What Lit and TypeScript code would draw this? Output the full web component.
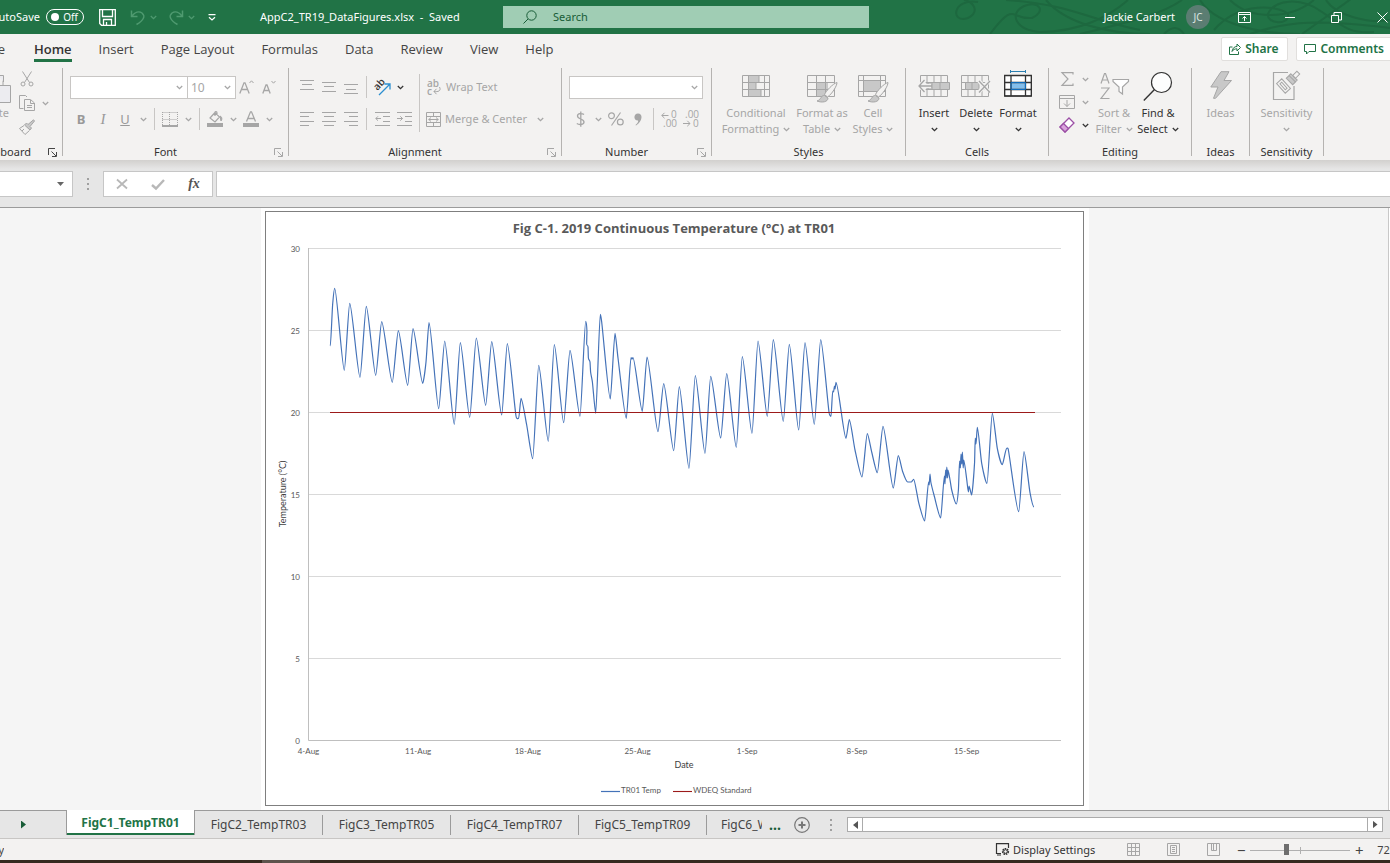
import { LitElement, html, svg, css, nothing } from "lit";
import { customElement, property } from "lit/decorators.js";

const icon = (w: number, h: number, body: unknown) => html`<svg class="ic" width=${w} height=${h} viewBox="0 0 ${w} ${h}" fill="none" stroke="currentColor" aria-hidden="true">${body}</svg>`;

/* Large ribbon pictures share one height; `top` is the space above the drawing. */
const picture = (w: number, top: number, body: unknown) => icon(w, 34, svg`<g transform="translate(0 ${top})">${body}</g>`);

const chevron = () => icon(7, 5, svg`<path d="M.8 1 3.5 3.6 6.2 1" stroke-width="1.3"/>`);
const lines = (rows: number[][]) => svg`${rows.map(([x1, x2, y]) => svg`<path d="M${x1} ${y}.5H${x2}"/>`)}`;

const tableGrid = svg`<path d="M.5 .5H27.5V21.5H.5ZM7 1V21M14 1V21M21 1V21M1 7.5H27M1 14.5H27"/>`;
const brush = svg`<path d="M30 7.500C26 8.500 19 16 17.500 19.500L20.500 22C25 19 30 11 30 7.500Z" fill="#f3f2f1"/><path d="M17.500 20.500C14 20 14 25 10 26C15 28 21 27 21 23Z" fill="#c8c8c8"/>`;

const ICONS: Record<string, unknown> = {
  save: icon(17, 17, svg`<path d="M.7 .7H16.300V16.300H2.500L.7 14.500ZM3.500 1V7.500H13.500V1M4.500 16V10.500H12.500V16M7.500 16V13" stroke-width="1.300"/>`),
  undo: icon(16, 16, svg`<path d="M1.500 1.500V7.500H7.500M2 7C5 3 9 2 12 4C15.500 7 14 11 6.500 15.500" stroke-width="1.500"/>`),
  redo: icon(16, 16, svg`<path d="M14.500 1.500V7.500H8.500M14 7C11 3 7 2 4 4C.5 7 2 11 9.500 15.500" stroke-width="1.500"/>`),
  customize: icon(8, 7, svg`<path d="M.5 .7H7.500M1 3.200 4 6 7 3.200" stroke-width="1.200"/>`),
  search: icon(14, 14, svg`<circle cx="8.500" cy="5.500" r="4.700"/><path d="M5 9 .5 13.500"/>`),
  ribbonMode: icon(13, 11, svg`<path d="M.5 .5H12.500V10.500H.5ZM.5 2.500H12.500M6.500 9V4.500M4.500 6.500 6.500 4.500 8.500 6.500"/>`),
  minimize: icon(10, 10, svg`<path d="M0 5.500H10"/>`),
  restore: icon(11, 11, svg`<path d="M.5 3.500H7.500V10.500H.5ZM3 3V.5H10.500V8H8"/>`),
  close: icon(11, 11, svg`<path d="M.5 .5 10.500 10.500M10.500 .5 .5 10.500"/>`),
  share: icon(12, 12, svg`<path d="M3.500 4H.5V11.500H9.500V8.500M3 8.500C3.500 5 5.500 3.500 8 3.500V1L11.500 4.500 8 8V5.800C6 5.800 4 6.500 3 8.500Z"/>`),
  comment: icon(12, 11, svg`<path d="M.5 .5H11.500V7.500H5L2.500 10V7.500H.5Z"/>`),
  paste: icon(30, 34, svg`<path d="M2 6.500H22V28.500H2Z" /><path d="M17 4.500H22.500V11M10 14.500H29.500V31.500H10Z" fill="#ececf0"/>`),
  cut: icon(14, 16, svg`<path d="M2.500 .5 9.500 11.500M11.500 .5 4.500 11.500"/><circle cx="3" cy="13" r="2"/><circle cx="11" cy="13" r="2"/>`),
  copy: icon(16, 16, svg`<path d="M4.500 13.500H.5V.5H6.500L8 2"/><path d="M5.500 4.500H11.500L15.500 8V15.500H5.500ZM11.500 5V8.500H15M8 10.500H13M8 12.500H13"/>`),
  painter: icon(16, 16, svg`<path d="M14.500 .8 9 5.500 7.500 4 5.500 6 11 11 12.500 9 11 7.500 15.500 2Z" fill="#c8c8c8"/><path d="M5 6.500 .5 9.500 6 15.500 10.500 11.500M3 12 5 10"/>`),
  launcher: icon(9, 9, svg`<path d="M.5 7V.5H7M3.500 3.500 8 8M8.500 4V8.500H4"/>`),
  borders: icon(16, 15, svg`<path d="M.5 .5H15M.5 0V14M15.500 0V14M.5 7.500H15M7.500 0V14" stroke-dasharray="1 1"/><path d="M0 14H16" stroke-width="2"/>`),
  fill: icon(17, 16, svg`<path d="M8 1.500 3 7 8 11 12.500 6ZM8 5V1.500C8 .3 10 .3 10 2V4" stroke-width="1.200"/><path d="M13 5C15.500 6 15 9 14 10Z" fill="currentColor"/><path d="M0 14H16" stroke-width="4"/>`),
  fontColor: icon(16, 16, svg`<path d="M3.500 10.500 7.500 .8H8.500L12.500 10.500M5 7.500H11" stroke-width="1.300"/><path d="M0 14H16" stroke-width="4"/>`),
  growFont: icon(16, 16, svg`<path d="M.8 14.500 5 3.800H6L10.200 14.500M2.500 10.500H8.500" stroke-width="1.300"/><path d="M10.500 4 12.500 1.800 14.500 4"/>`),
  shrinkFont: icon(14, 16, svg`<path d="M.8 14.500 4 6H5L8.200 14.500M2.200 11.500H6.800" stroke-width="1.300"/><path d="M9.500 2 11.500 4.200 13.500 2"/>`),
  top: icon(14, 14, lines([[0, 14, 0], [2, 12, 4], [0, 14, 9]])),
  middle: icon(14, 14, lines([[0, 14, 2], [2, 12, 6], [0, 14, 11]])),
  bottom: icon(14, 14, lines([[0, 14, 4], [2, 12, 9], [0, 14, 13]])),
  left: icon(14, 14, lines([[0, 14, 0], [0, 9, 4], [0, 14, 9], [0, 9, 13]])),
  center: icon(14, 14, lines([[0, 14, 0], [2, 12, 4], [0, 14, 9], [2, 12, 13]])),
  right: icon(14, 14, lines([[0, 14, 0], [5, 14, 4], [0, 14, 9], [5, 14, 13]])),
  outdent: icon(15, 14, svg`${lines([[0, 15, 0], [8, 15, 4], [8, 15, 9], [0, 15, 13]])}<path d="M6 6.500H.8M3 4.300 .8 6.500 3 8.700"/>`),
  indent: icon(15, 14, svg`${lines([[0, 15, 0], [8, 15, 4], [8, 15, 9], [0, 15, 13]])}<path d="M0 6.500H5.500M3.300 4.300 5.500 6.500 3.300 8.700"/>`),
  orient: icon(18, 18, svg`<text class="glyph" transform="translate(4.500 13) rotate(-48)">ab</text><path d="M6 17 16.500 6.500M11.500 6H17V11.500" stroke="#2b8fd0" stroke-width="1.300"/>`),
  wrap: icon(16, 16, svg`<text class="glyph" x="1" y="8">ab</text><text class="glyph" x="1" y="16">c</text><path d="M13.500 8C15.500 12 12 13 8 12.500M10.500 9.800 8 12.500 10.500 15.200"/>`),
  merge: icon(15, 15, svg`<path d="M.5 .5H14.500V14.500H.5ZM.5 4.500H14.500M.5 10.500H14.500M7.500 .5V4M7.500 11V14M2.500 7.500H12.500M5 5.500 2.800 7.500 5 9.500M10 5.500 12.200 7.500 10 9.500"/>`),
  dollar: icon(9, 16, svg`<path d="M8 3.500C6 2 1.500 2.200 1.500 5C1.500 8.500 8 7.500 8 11C8 14 3 14 .8 12.500M4.800 .5V15.800" stroke-width="1.300"/>`),
  percent: icon(16, 14, svg`<circle cx="3.500" cy="3.800" r="2.900" stroke-width="1.200"/><circle cx="12.300" cy="10" r="2.900" stroke-width="1.200"/><path d="M12.500 .5 3.500 13.500" stroke-width="1.200"/>`),
  comma: icon(8, 13, svg`<path d="M4 .5C9 .5 9 8 2 12.500L1.500 12C4 10 4.500 8 4 7.500C-1 7.500-.5 .5 4 .5Z" fill="currentColor" stroke="none"/>`),
  incDec: icon(17, 16, svg`<path d="M7.500 4.500H.8M3.500 1.800 .8 4.500 3.500 7.200"/><text class="digit" x="10" y="7">0</text><text class="digit" x="2" y="16">.00</text>`),
  decDec: icon(17, 16, svg`<text class="digit" x="2" y="7">.00</text><path d="M0 12.500H7M4.300 9.800 7 12.500 4.300 15.200"/><text class="digit" x="10" y="16">0</text>`),
  condFormat: picture(28, 5, svg`<path d="M6.500 1H17V7H6.500ZM6.500 8H14V14H6.500ZM6.500 15H19V21H6.500Z" fill="#c8c8c8" stroke="none"/><path d="M.5 .5H27.500V21.500H.5ZM6.500 1V21M17 1V7M14 7V14M19 14V21M22.500 1V21M1 7.500H27M1 14.500H27"/>`),
  formatTable: picture(31, 5, svg`<path d="M10 8H21V21H10Z" fill="#c8c8c8" stroke="none"/><path d="M.5 .5H27.500V21.500H.5ZM9.500 1V21M18.500 1V21M1 7.500H27M1 14.500H27"/>${brush}`),
  cellStyle: picture(31, 5, svg`<path d="M5 5H23V17H5Z" fill="#c8c8c8" stroke="none"/><path d="M.5 .5H27.500V21.500H.5ZM5.500 1V21M22.500 1V21M1 5.500H27M1 16.500H27"/>${brush}`),
  insertCell: picture(32, 5, svg`<g transform="translate(2)">${tableGrid}</g><path d="M10 7.500H31.500V14.500H10Z" fill="#c8c8c8"/><path d="M22 8V14M14 8V14"/><path d="M13 11H1.500M6.500 6 1.500 11 6.500 16" stroke="#f3f2f1" stroke-width="4"/><path d="M14 11H1M6.500 5 1 11 6.500 17" stroke-width="1.300"/>`),
  deleteCell: picture(30, 5, svg`${tableGrid}<path d="M4.500 7.500H18V14.500H4.500Z" fill="#c8c8c8"/><path d="M11 8V14"/><path d="M18 6 28 17M28 6 18 17" stroke="#f3f2f1" stroke-width="4"/><path d="M18 6 29 17.500M29 6 18 17.500" stroke-width="1.300"/>`),
  formatCell: picture(28, 0, svg`<path d="M.5 5.500H27.500V26H.5Z" fill="#fff"/><path d="M6.500 12.500H21.500V19.500H6.500Z" fill="#83beec" stroke="none"/><path d="M.7 5.500H27.300V26H.7ZM7 6V26M21.500 6V26M1 12.500H27M1 19.500H27" stroke-width="1.300"/><path d="M7 12.500H21.500V19.500H7Z" stroke="#0f6cbd"/><path d="M6.500 0V3M21.500 0V3M6.500 1.500H21.500" stroke="#2b7fb0"/>`),
  sum: icon(13, 14, svg`<path d="M12 2.500V.7H1L7 7 1 13.300H12V11.500" stroke-width="1.200"/>`),
  fillDown: icon(16, 14, svg`<path d="M.5 .5H15.500V13.500H.5ZM.5 3.500H15.500M8 5V11.500M5 8.500 8 11.500 11 8.500"/>`),
  eraser: icon(16, 16, svg`<path d="M10 1 15 6 6 15 1 10Z" fill="#fff" stroke="#9b4fa5" stroke-width="1.300"/><path d="M4.500 6.500 9.500 11.500 6 15 1 10Z" fill="#d9a3dc" stroke="#9b4fa5" stroke-width="1.300"/>`),
  sort: picture(29, 2, svg`<path d="M1 11.500 4.500 1.500H5.500L9 11.500M2.500 8H7.500M1 16H9L1 26.500H9.500" stroke-width="1.200"/><path d="M13 7.500H28.500V9.500L22.500 15V22L19 19.500V15L13 9.500Z" fill="#fff" stroke-width="1.200"/>`),
  find: picture(30, 1, svg`<circle cx="18.500" cy="11.500" r="10" fill="#fdfdfd" stroke-width="1.200"/><path d="M11.500 18.500.8 29.500" stroke-width="1.400"/>`),
  ideas: picture(22, 1, svg`<path d="M11 .7H19L14 9.500H21.500L5.500 27.300H3.500L8 16H.8Z" fill="#c8c8c8"/>`),
  sensitivity: picture(28, 0, svg`<path d="M15 2.500H.5V29.500H21V16" stroke-width="1.200"/><g transform="translate(10.500 16) rotate(-42)"><path d="M-3.500-6.500H3.500V6.500H-3.500ZM-1.200-4H1.200V4H-1.200Z"/></g><g transform="translate(20 8) rotate(45)"><path d="M-4.500 1H4.500V5H-4.500ZM-4.500-1.500H4.500V1H-4.500Z" fill="#c8c8c8"/><path d="M-2-1.500V-7.500H2V-1.500Z"/></g>`),
  cancel: icon(12, 10, svg`<path d="M1 .5 11 9.500M11 .5 1 9.500" stroke-width="1.800"/>`),
  enter: icon(14, 11, svg`<path d="M1 6 5 9.500 13 1" stroke-width="2.400"/>`),
  addSheet: icon(16, 16, svg`<circle cx="8" cy="8" r="7.300" stroke-width="1.200"/><path d="M8 4.500V11.500M4.500 8H11.500" stroke-width="2"/>`),
  display: icon(14, 13, svg`<path d="M5 10.500H.5V.7H12.500V5M1 12H5" stroke-width="1.200"/><circle cx="9.500" cy="8.500" r="2.800" stroke-width="1.600" stroke-dasharray="1.600 .8"/><circle cx="9.500" cy="8.500" r="1.800"/>`),
  viewNormal: icon(13, 13, svg`<path d="M.5 .5H12.500V12.500H.5ZM4.500 .5V12.500M8.500 .5V12.500M.5 4.500H12.500M.5 8.500H12.500"/>`),
  viewLayout: icon(13, 13, svg`<path d="M.5 .5H12.500V12.500H.5ZM3.500 2.500H9.500V10.500H3.500ZM5 4.500H8M5 6.500H8M5 8.500H8"/>`),
  viewBreak: icon(13, 13, svg`<path d="M.5 .5H12.500V12.500H.5ZM4.500 .5V7.500H9.500V.5M6.500 .5V7"/>`),
};

/* ---------- chart ---------- */

const SERIES: [number, number][] = [
  [330.3, 346], [332.6, 305], [334.7, 288.3], [344.3, 370.3], [349.7, 303.3], [360, 377.3], [366.3, 306.3],
  [375.7, 375.3], [381.7, 321.7], [392.3, 382.3], [398.3, 330.7], [407.7, 385.3], [413, 328.7], [422.7, 383.3],
  [426, 362], [429, 322.7], [438.7, 408.7], [444.7, 341], [454.3, 424.3], [460.3, 342.7], [469.7, 417.3],
  [476.3, 338], [485.7, 405.3], [491.7, 341.7], [501.7, 415], [507.3, 343.7], [516, 416], [518.7, 418.3],
  [521, 398.3], [526.7, 425], [532.7, 458.7], [538.7, 365.3], [548.3, 441.3], [554.3, 344.7], [563.7, 422.7],
  [570, 350.3], [580, 416.3], [585.7, 321.3], [587, 332], [586.6, 343], [588, 347], [588.4, 358], [590, 362],
  [590.6, 372], [592.4, 382], [595.7, 413.3], [600.3, 314.3], [601.7, 322], [610.3, 399], [615, 333.3],
  [618, 358], [626.3, 418.3], [631, 357.7], [632, 359], [633, 357.7], [642.3, 411.3], [647, 357], [658, 431.7],
  [663.7, 383.7], [673.7, 450.7], [679.3, 386.7], [689, 468.3], [695.3, 375.7], [705, 453.3], [710.7, 376.3],
  [720.7, 438], [726.7, 373.7], [736.3, 447.3], [742.3, 356.7], [752, 433.3], [758, 341], [767.3, 416.3],
  [773.3, 339.7], [783.3, 421.3], [789.3, 344.3], [798.7, 430], [805, 342.7], [814.3, 424.3], [820.7, 339.7],
  [829, 412], [831, 416.3], [832.7, 391], [833.6, 392], [834.4, 386], [835, 389], [836, 382.3], [846, 438.3],
  [849.3, 419.7], [855, 450], [862, 477], [867.3, 433.7], [871.7, 452], [877.3, 472.7], [883, 426.3],
  [893.3, 488], [898.3, 455.7], [902.7, 471.7], [907.7, 482], [911.3, 482], [913.7, 479.3], [918.7, 502.7],
  [924.7, 521], [928.6, 482], [929.2, 485], [930, 474], [930.8, 482], [934, 495], [940.7, 518], [944.4, 476],
  [945, 484], [945.6, 470], [946.2, 478], [946.8, 467], [947.6, 478], [948, 470], [951.7, 490], [956.3, 504],
  [958.4, 490], [959.6, 461], [960.4, 468], [961, 454], [961.8, 464], [962.4, 452], [963.2, 468], [963.8, 460],
  [966.7, 479.3], [968.4, 492], [969, 486], [971.7, 495], [974.6, 462], [975.2, 438], [976, 444],
  [977.3, 427.3], [981.7, 463.3], [987, 483.3], [992.3, 413.3], [997.3, 448.3], [1002.3, 464.7],
  [1006.5, 448.5], [1008.2, 449], [1018.7, 511.7], [1024, 451.7], [1030, 492.7], [1034, 507],
];

/* Slope is flat at turning points and averaged elsewhere, so the curve never overshoots. */
function curve(points: [number, number][]): string {
  const slope = points.map(([x, y], i) => {
    if (i === 0 || i === points.length - 1) return 0;
    const [px, py] = points[i - 1];
    const [nx, ny] = points[i + 1];
    return (y - py) * (ny - y) <= 0 || nx <= px ? 0 : (ny - py) / (nx - px);
  });
  let d = `M${points[0][0]} ${points[0][1]}`;
  for (let i = 1; i < points.length; i++) {
    const [x0, y0] = points[i - 1];
    const [x1, y1] = points[i];
    const k = (x1 - x0) * 0.22;
    d += `C${(x0 + k).toFixed(1)} ${(y0 + slope[i - 1] * k).toFixed(1)} ${(x1 - k).toFixed(1)} ${(y1 - slope[i] * k).toFixed(1)} ${x1} ${y1}`;
  }
  return d;
}

@customElement("temp-chart")
export class TempChart extends LitElement {
  static styles = css`
    :host { display: block; background: #fff; }
    svg { display: block; width: 100%; height: auto; font-family: Lato, "Open Sans", sans-serif; }
    .title { font: bold 13px "Open Sans", "Noto Sans", sans-serif; fill: #595959; }
    .tick { font-size: 8px; fill: #595959; }
    .name { font-size: 9px; fill: #404040; }
    .grid { stroke: #d9d9d9; }
    .axis { stroke: #bfbfbf; fill: none; }
    .frame { stroke: #7f7f7f; fill: none; }
    .temp { stroke: #4472b8; fill: none; stroke-width: 1.2; stroke-linejoin: round; }
    .std { stroke: #9c1a1a; stroke-width: 1.1; }
  `;
  render() {
    const weeks = ["4-Aug", "11-Aug", "18-Aug", "25-Aug", "1-Sep", "8-Sep", "15-Sep"];
    const y = (v: number) => 740.5 - v * 16.4;
    return html`<svg viewBox="261 208 828 602" role="img" aria-label="Continuous temperature at TR01">
      <rect class="frame" x="265.5" y="211.5" width="818" height="594" />
      <text class="title" x="674" y="233" text-anchor="middle">Fig C-1. 2019 Continuous Temperature (°C) at TR01</text>
      ${[5, 10, 15, 20, 25, 30].map((v) => svg`<path class="grid" d="M308 ${y(v)}H1061" />`)}
      ${[0, 5, 10, 15, 20, 25, 30].map((v) => svg`<text class="tick" x="300" y=${y(v) + 3} text-anchor="end">${v}</text>`)}
      <path class="axis" d="M308.5 248V740.5H1061" />
      ${weeks.map((w, i) => svg`<text class="tick" x=${308.5 + i * 109.67} y="754" text-anchor="middle">${w}</text>`)}
      <path class="temp" d=${curve(SERIES)} />
      <path class="std" d="M330 412.500H1035" />
      <text class="name" transform="translate(286 494) rotate(-90)" text-anchor="middle">Temperature (°C)</text>
      <text class="name" x="684" y="768" text-anchor="middle">Date</text>
      <path class="temp" d="M601 791.500H620" /><text class="tick" x="621" y="793">TR01 Temp</text>
      <path class="std" d="M673 791.500H692" /><text class="tick" x="693" y="793">WDEQ Standard</text>
    </svg>`;
  }
}

const shared = css`
  *, *::before { box-sizing: border-box; }
  button, input, select { font: inherit; color: inherit; margin: 0; padding: 0; border: 0; background: none; border-radius: 0; }
  button { display: inline-flex; align-items: center; justify-content: center; white-space: nowrap; }
  .ic { display: block; flex: none; overflow: visible; }
  .glyph { font: 600 10px "Open Sans", sans-serif; fill: currentColor; stroke: none; }
  .digit { font: 10px "Open Sans", sans-serif; fill: currentColor; stroke: none; }
`;

/* ---------- ribbon group ---------- */

@customElement("ribbon-group")
export class RibbonGroup extends LitElement {
  @property() label = "";
  @property() launcher = "";
  static styles = [shared, css`
    :host { display: flex; flex: none; height: 96px; }
    .group { display: flex; flex-direction: column; flex: 1; min-width: 0; }
    .body { display: flex; flex: 1; min-height: 0; }
    .foot { display: flex; height: 16px; line-height: 16px; }
    .label { flex: 1; display: flex; justify-content: center; white-space: nowrap; color: #333; }
    .open { width: 20px; color: #a6a6a6; }
    .open.on { color: #444; }
    .sep { width: 1px; height: 88px; margin-top: 4px; background: #b5b3b1; }
  `];
  render() {
    return html`<section class="group" aria-label=${this.label}>
        <div class="body"><slot></slot></div>
        <div class="foot"><span class="label"><slot name="label">${this.label}</slot></span>
          ${this.launcher ? html`<button class="open ${this.launcher}" aria-label="${this.label} settings">${ICONS.launcher}</button>` : nothing}
        </div>
      </section><span class="sep"></span>`;
  }
}

/* ---------- application ---------- */

const big = (name: string, text: string[], drops: boolean, cls: string) => html`<button class="big ${cls}">
  <span class="pic">${ICONS[name]}</span>
  ${text.map((t, i) => html`<span class="line">${t}${drops && i === 1 ? chevron() : nothing}</span>`)}
  ${drops && text.length === 1 ? html`<span class="line">${chevron()}</span>` : nothing}
</button>`;

const cell = (name: string, label: string, cls = "") => html`<button class="cell ${cls}" aria-label=${label}>${ICONS[name]}</button>`;
const drop = (label: string, cls = "") => html`<button class="drop ${cls}" aria-label="${label} options">${chevron()}</button>`;

@customElement("app-root")
export class AppRoot extends LitElement {
  static styles = [shared, css`
    :host { display: block; overflow: hidden; min-height: 100vh; font: 11px/16px "Noto Sans", "Open Sans", sans-serif; color: #444; background: #f3f2f1; }

    .titlebar { position: relative; display: flex; align-items: center; height: 34px; background: #217346; color: #fff; overflow: hidden; }
    .swirl { position: absolute; right: 0; top: 0; stroke: #1d683f; fill: none; stroke-width: 2; }
    .quick, .account { display: flex; align-items: center; position: relative; }
    .quick { flex: 0 0 260px; }
    .autosave { display: flex; align-items: center; gap: 6px; }
    .clip { display: flex; justify-content: flex-end; width: 40px; overflow: hidden; }
    .clipname { width: 31px; margin-right: auto; }
    .toggle { width: 38px; height: 16px; border: 1px solid #fff; border-radius: 8px; justify-content: space-between; padding: 0 5px 0 4px; font-size: 10px; line-height: 14px; }
    .toggle::before { content: ""; width: 8px; height: 8px; border-radius: 4px; background: #fff; }
    .save { width: 46px; }
    .history { width: 16px; color: #4f9a70; }
    .gapdrop { width: 14px; margin-right: 8px; color: #4f9a70; }
    .custom { width: 12px; }
    .doc { flex: 0 0 243px; position: relative; white-space: pre; }
    .search { flex: 0 1 366px; display: flex; align-items: center; gap: 16px; height: 22px; padding: 0 20px; background: #a0cdb4; color: #185c37; position: relative; }
    .search input { flex: 1; min-width: 0; outline: 0; }
    .search input::placeholder { color: #185c37; opacity: 1; }
    .account { margin-left: auto; margin-right: -15px; }
    .avatar { width: 24px; height: 24px; border-radius: 12px; background: #5b7d72; font-size: 10px; color: #dce6e2; margin: 0 11px; }
    .win { width: 46px; height: 34px; }

    .tabs { display: flex; align-items: flex-start; height: 30px; }
    .file { width: 5px; display: flex; justify-content: flex-end; overflow: hidden; margin-right: 29px; }
    nav { display: flex; gap: 27px; }
    nav a, .file a { color: #444; text-decoration: none; white-space: nowrap; font: 13px/24px "Open Sans", "Noto Sans", sans-serif; height: 28px; padding-top: 3px; }
    nav a.on { font-weight: 600; border-bottom: 3px solid #217346; }
    .actions { display: flex; gap: 8px; margin: 3px -4px 0 auto; }
    .action { height: 24px; padding: 0 9px 0 7px; gap: 4px; background: #fff; border: 1px solid #e1dfdd; border-radius: 2px; color: #217346; font-weight: 600; font-size: 12px; }

    .ribbon { display: flex; color: #a6a6a6; position: relative; }
    .clipboard { width: 63px; } .font { width: 226px; } .align { width: 273px; } .number { width: 150px; }
    .styles { width: 194px; } .cells { width: 143px; } .editing { width: 143px; } .ideas { width: 58px; } .sens { width: 74px; }
    .rows { display: flex; flex-direction: column; gap: 10px; padding: 12px 0 0 7px; }
    .rows.flushleft { padding-left: 0; }
    .row { display: flex; align-items: center; height: 22px; }
    .cell { width: 22px; height: 22px; }
    .drop { width: 14px; height: 22px; }
    .mergedrop { margin-left: 6px; }
    .on, .dark { color: #333; }
    .dark .pic { color: #a6a6a6; }
    .bar { width: 1px; height: 22px; background: #c8c6c4; margin: 0 4px; flex: none; }
    .tall { height: 58px; margin: 10px 6px 0 4px; }
    .b, .i, .u { font-size: 13px; color: #999; }
    .b { font-weight: 700; } .i { font-family: "Liberation Serif", serif; font-style: italic; font-size: 15px; } .u { text-decoration: underline; }
    .pick { display: flex; align-items: center; align-self: flex-start; height: 23px; background: #fff; border: 1px solid #c8c6c4; padding-right: 4px; font-size: 12px; }
    .pick select { flex: 1; min-width: 0; appearance: none; padding-left: 3px; align-self: stretch; }
    .pick + .pick { margin-left: -1px; }
    .w118 { width: 118px; } .w49 { width: 49px; } .w134 { width: 134px; }
    .text { gap: 4px; height: 22px; }
    .bigs { display: flex; padding: 6px 0 0 7px; }
    .big { flex-direction: column; justify-content: flex-start; height: 68px; }
    .pic { display: flex; justify-content: center; height: 35px; }
    .line { display: flex; align-items: center; justify-content: center; gap: 4px; height: 16px; }
    .w74 { width: 74px; } .w58 { width: 58px; } .w44 { width: 44px; } .w42 { width: 42px; } .fill { flex: 1; }
    .bigs.flush { padding-left: 0; flex: 1; }
    .stack { display: flex; flex-direction: column; gap: 1px; padding: 4px 0 0 7px; }
    .paste { display: flex; width: 11px; overflow: hidden; flex-direction: column; align-items: flex-end; margin-top: 7px; height: 50px; justify-content: flex-start; }
    .paste span { padding-right: 2px; }
    .tools { display: flex; flex-direction: column; gap: 2px; padding: 4px 0 0 5px; }

    .formula { display: flex; height: 48px; padding-top: 11px; background: linear-gradient(#d2d0ce, #e6e6e6 9px); border-bottom: 1px solid #9b9b9b; }
    .box { display: flex; align-items: center; height: 26px; background: #fff; border: 1px solid #c6c6c6; }
    .namebox { width: 73px; border-left: 0; padding-right: 8px; }
    .namebox input { flex: 1; min-width: 0; }
    .tri { width: 7px; height: 4px; background: #666; clip-path: polygon(0 0, 100% 0, 50% 100%); }
    .dots { width: 30px; display: flex; align-items: center; justify-content: center; height: 26px; color: #a0a0a0; }
    .dots.wide { width: 32px; }
    .fx { width: 110px; color: #b8b8b8; margin-right: 3px; }
    .fx button { width: 36px; height: 24px; }
    .fx .fn { color: #555; font: italic bold 14px "Liberation Serif", serif; }
    .entry { flex: 1; border-right: 0; }
    .entry input { flex: 1; outline: 0; }

    .sheet { display: grid; grid-template-columns: 261fr 828fr 301fr; background: #f5f5f5; position: relative; }
    .vscroll { position: absolute; right: 0; top: 0; bottom: 0; width: 2px; border-left: 1px solid #c8c8c8; background: #fff; }
    temp-chart { grid-column: 2; }

    .sheets { display: flex; align-items: center; height: 29px; background: #e6e6e6; border-top: 1px solid #9b9b9b; border-bottom: 1px solid #c8c6c4; font-size: 12px; }
    .nav { width: 66px; align-self: stretch; padding-right: 19px; }
    .arrow { width: 5px; height: 8px; background: #185c37; clip-path: polygon(0 0, 100% 50%, 0 100%); }
    .arrow.grey { background: #555; } .arrow.back { transform: rotate(180deg); }
    .tab { flex: 0 1 128px; height: 20px; border-right: 1px solid #9b9b9b; }
    .tab.current { flex-basis: 129px; align-self: flex-start; height: 25px; margin-top: -1px; background: #fff; color: #217346; font-weight: 700; border: solid #9b9b9b; border-width: 0 1px; box-shadow: inset 0 -2px #217346; }
    .tab.cut { flex-basis: 55px; border: 0; padding-left: 14px; justify-content: flex-start; overflow: hidden; }
    .more { color: #185c37; font-weight: 700; width: 26px; font-size: 14px; }
    .add { width: 27px; color: #777; }
    .hscroll { flex: 1; display: flex; margin-right: 7px; height: 15px; }
    .hscroll button { width: 16px; background: #fff; border: 1px solid #ababab; }
    .track { flex: 1; background: #fff; border: solid #ababab; border-width: 1px 0; }

    .status { display: flex; align-items: center; height: 21px; }
    .ready { width: 4px; display: flex; justify-content: flex-end; overflow: hidden; }
    .statusright { display: flex; align-items: center; margin-left: auto; margin-right: -9px; }
    .disp { gap: 3px; margin-right: 18px; color: #333; }
    .view { width: 40px; color: #a6a6a6; }
    .zoombtn { width: 16px; font-size: 15px; }
    .zoom { appearance: none; width: 100px; height: 16px; margin: 0 1px; background: linear-gradient(#b0b0b0, #b0b0b0) 50% 8px / 100% 1px no-repeat, linear-gradient(#b0b0b0, #b0b0b0) 50% 5px / 1px 7px no-repeat; }
    .zoom::-webkit-slider-thumb { appearance: none; width: 5px; height: 11px; background: #6e6e6e; }
    .pct { margin-left: 10px; }
    .taskbar { display: flex; height: 3px; background: #35291f; }
    .taskbar span { width: 48px; margin-left: 262px; background: #5d534c; }
  `];

  render() {
    const dots = icon(2, 12, svg`<path d="M1 0V12" stroke-width="2" stroke-dasharray="2 3"/>`);
    return html`
      <header class="titlebar">
        <svg class="swirl" width="440" height="34" viewBox="0 0 440 34" aria-hidden="true">
          <path d="M28 2C2-2 0 24 18 18C30 12 24 2 14 0M56 0C120 4 140 20 190 30M40 34C66 0 60 20 82 18C96 12 90 0 74 6C58 14 66 30 90 32C130 32 160 16 178 0M96 0C116 24 160 34 200 34M130 34C170 24 210 16 232 0M214 34C222 26 228 26 234 34M250 0C262 20 300 34 350 34M264 30C290 0 330 6 338 14C340 26 316 24 318 14C324 0 350-4 372 12C392 26 400 34 424 32M280 0C300 20 340 20 364 0M300 34C340 20 370 20 440 28M352 34C380 14 400 0 402-2M376 0C386 16 420 24 440 20"/>
        </svg>
        <div class="quick">
          <div class="autosave"><span class="clip"><label for="auto">AutoSave</label></span><button id="auto" class="toggle">Off</button></div>
          <button class="save" aria-label="Save">${ICONS.save}</button>
          <button class="history" aria-label="Undo">${ICONS.undo}</button><button class="gapdrop" aria-label="Undo list">${chevron()}</button>
          <button class="history" aria-label="Redo">${ICONS.redo}</button><button class="gapdrop" aria-label="Redo list">${chevron()}</button>
          <button class="custom" aria-label="Customize toolbar">${ICONS.customize}</button>
        </div>
        <div class="doc">AppC2_TR19_DataFigures.xlsx  -  Saved</div>
        <label class="search">${ICONS.search}<input type="text" placeholder="Search" aria-label="Search" /></label>
        <div class="account"><span>Jackie Carbert</span><button class="avatar">JC</button>
          <button class="win" aria-label="Ribbon display">${ICONS.ribbonMode}</button><button class="win" aria-label="Minimize">${ICONS.minimize}</button>
          <button class="win" aria-label="Restore">${ICONS.restore}</button><button class="win" aria-label="Close">${ICONS.close}</button></div>
      </header>

      <div class="tabs">
        <span class="file"><a href="#file">File</a></span>
        <nav>${["Home", "Insert", "Page Layout", "Formulas", "Data", "Review", "View", "Help"].map((t, i) => html`<a href="#${t}" class=${i ? "" : "on"}>${t}</a>`)}</nav>
        <div class="actions"><button class="action">${ICONS.share}Share</button><button class="action">${ICONS.comment}Comments</button></div>
      </div>

      <div class="ribbon">
        <ribbon-group class="clipboard" label="Clipboard" launcher="on">
          <span slot="label" class="clip clipname">Clipboard</span>
          <button class="paste">${ICONS.paste}<span>Paste</span></button>
          <div class="tools">
            <div class="row">${cell("cut", "Cut")}</div>
            <div class="row">${cell("copy", "Copy")}${drop("Copy")}</div>
            <div class="row">${cell("painter", "Format Painter")}</div>
          </div>
        </ribbon-group>

        <ribbon-group class="font" label="Font" launcher="off">
          <div class="rows">
            <div class="row">
              <span class="pick w118"><select aria-label="Font name"><option></option></select>${chevron()}</span>
              <span class="pick w49"><select aria-label="Font size"><option>10</option></select>${chevron()}</span>
              ${cell("growFont", "Increase font size")}${cell("shrinkFont", "Decrease font size")}
            </div>
            <div class="row">
              <button class="cell b">B</button><button class="cell i">I</button><button class="cell u">U</button>${drop("Underline")}
              <span class="bar"></span>${cell("borders", "Borders")}${drop("Border")}
              <span class="bar"></span>${cell("fill", "Fill color")}${drop("Fill color")}
              ${cell("fontColor", "Font color")}${drop("Font color")}
            </div>
          </div>
        </ribbon-group>

        <ribbon-group class="align" label="Alignment" launcher="off">
          <div class="rows">
            <div class="row">${cell("top", "Top align")}${cell("middle", "Middle align")}${cell("bottom", "Bottom align")}
              <span class="bar"></span>${cell("orient", "Orientation", "on")}${drop("Orientation", "on")}</div>
            <div class="row">${cell("left", "Align left")}${cell("center", "Center")}${cell("right", "Align right")}
              <span class="bar"></span>${cell("outdent", "Decrease indent")}${cell("indent", "Increase indent")}</div>
          </div>
          <span class="bar tall"></span>
          <div class="rows flushleft">
            <div class="row"><button class="text">${ICONS.wrap}Wrap Text</button></div>
            <div class="row"><button class="text">${ICONS.merge}Merge &amp; Center</button>${drop("Merge", "mergedrop")}</div>
          </div>
        </ribbon-group>

        <ribbon-group class="number" label="Number" launcher="off">
          <div class="rows">
            <div class="row"><span class="pick w134"><select aria-label="Number format"><option></option></select>${chevron()}</span></div>
            <div class="row">${cell("dollar", "Accounting format")}${drop("Accounting")}${cell("percent", "Percent")}${cell("comma", "Comma style")}
              <span class="bar"></span>${cell("incDec", "Increase decimal")}${cell("decDec", "Decrease decimal")}</div>
          </div>
        </ribbon-group>

        <ribbon-group class="styles" label="Styles">
          <div class="bigs">${big("condFormat", ["Conditional", "Formatting"], true, "w74")}${big("formatTable", ["Format as", "Table"], true, "w58")}${big("cellStyle", ["Cell", "Styles"], true, "w44")}</div>
        </ribbon-group>

        <ribbon-group class="cells" label="Cells">
          <div class="bigs">${big("insertCell", ["Insert"], true, "w42 dark")}${big("deleteCell", ["Delete"], true, "w42 dark")}${big("formatCell", ["Format"], true, "w42 on")}</div>
        </ribbon-group>

        <ribbon-group class="editing" label="Editing">
          <div class="stack">
            <div class="row">${cell("sum", "AutoSum")}${drop("AutoSum")}</div>
            <div class="row">${cell("fillDown", "Fill")}${drop("Fill")}</div>
            <div class="row">${cell("eraser", "Clear")}${drop("Clear", "on")}</div>
          </div>
          <div class="bigs flush">${big("sort", ["Sort &", "Filter"], true, "w44")}${big("find", ["Find &", "Select"], true, "w44 on")}</div>
        </ribbon-group>

        <ribbon-group class="ideas" label="Ideas"><div class="bigs flush">${big("ideas", ["Ideas"], false, "fill")}</div></ribbon-group>
        <ribbon-group class="sens" label="Sensitivity"><div class="bigs flush">${big("sensitivity", ["Sensitivity"], true, "fill")}</div></ribbon-group>
      </div>

      <div class="formula">
        <div class="box namebox"><input type="text" aria-label="Name box" /><span class="tri"></span></div>
        <span class="dots">${dots}</span>
        <div class="box fx"><button aria-label="Cancel">${ICONS.cancel}</button><button aria-label="Enter">${ICONS.enter}</button><button class="fn" aria-label="Insert function">fx</button></div>
        <div class="box entry"><input type="text" aria-label="Formula" /></div>
      </div>

      <main class="sheet"><temp-chart></temp-chart><span class="vscroll"></span></main>

      <div class="sheets">
        <button class="nav" aria-label="Next sheets"><span class="arrow"></span></button>
        ${["FigC1_TempTR01", "FigC2_TempTR03", "FigC3_TempTR05", "FigC4_TempTR07", "FigC5_TempTR09"].map((t, i) => html`<button class="tab ${i ? "" : "current"}">${t}</button>`)}
        <button class="tab cut">FigC6_WQ</button>
        <button class="more" aria-label="More sheets">...</button>
        <button class="add" aria-label="New sheet">${ICONS.addSheet}</button>
        <span class="dots wide">${dots}</span>
        <div class="hscroll"><button aria-label="Scroll left"><span class="arrow grey back"></span></button><span class="track"></span><button aria-label="Scroll right"><span class="arrow grey"></span></button></div>
      </div>

      <footer class="status">
        <span class="ready">Ready</span>
        <div class="statusright">
          <button class="disp">${ICONS.display}Display Settings</button>
          <button class="view" aria-label="Normal view">${ICONS.viewNormal}</button><button class="view" aria-label="Page layout view">${ICONS.viewLayout}</button><button class="view" aria-label="Page break view">${ICONS.viewBreak}</button>
          <button class="zoombtn">−</button><input class="zoom" type="range" min="0" max="100" value="36" aria-label="Zoom" /><button class="zoombtn">+</button><span class="pct">72%</span>
        </div>
      </footer>
      <div class="taskbar"><span></span></div>
    `;
  }
}
